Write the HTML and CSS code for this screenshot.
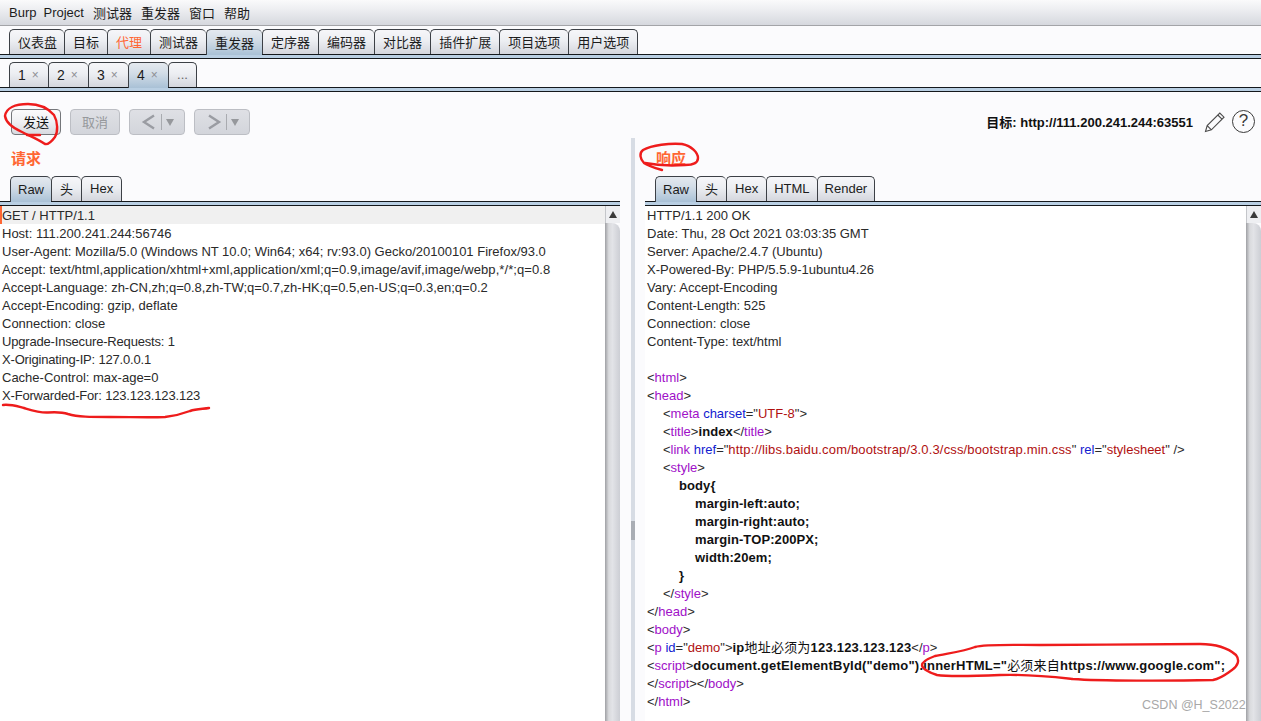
FILE: index.html
```html
<!DOCTYPE html>
<html lang="zh-CN">
<head>
    <meta charset="UTF-8">
    <meta name="viewport" content="width=device-width, initial-scale=1.0">
    <title>Burp Suite</title>
    <link rel="stylesheet" href="styles.css">
</head>
<body>
    <div class="app">
        <div class="menubar">
            <span class="menu-burp">Burp</span><span>Project</span><span>测试器</span><span>重发器</span><span>窗口</span><span>帮助</span>
        </div>

        <div class="tabstrip main-tabs">
            <div class="tab tab-first">仪表盘</div>
            <div class="tab">目标</div>
            <div class="tab tab-alert">代理</div>
            <div class="tab">测试器</div>
            <div class="tab tab-active">重发器</div>
            <div class="tab">定序器</div>
            <div class="tab">编码器</div>
            <div class="tab">对比器</div>
            <div class="tab">插件扩展</div>
            <div class="tab">项目选项</div>
            <div class="tab tab-last">用户选项</div>
        </div>
        <div class="rule"></div>

        <div class="tabstrip sub-tabs">
            <div class="tab tab-num tab-first">1<i>×</i></div>
            <div class="tab tab-num">2<i>×</i></div>
            <div class="tab tab-num">3<i>×</i></div>
            <div class="tab tab-num tab-active">4<i>×</i></div>
            <div class="tab tab-more tab-last">...</div>
        </div>
        <div class="rule"></div>

        <div class="toolbar">
            <button class="btn btn-send">发送</button>
            <button class="btn btn-off btn-cancel">取消</button>
            <button class="btn btn-off btn-nav">
                <svg width="16" height="18" viewBox="0 0 16 18"><path d="M13 2.5 3 9l10 6.5" fill="none" stroke="#9a9ca2" stroke-width="2.4"/></svg>
                <span class="nav-sep"></span>
                <span class="nav-drop"></span>
            </button>
            <button class="btn btn-off btn-nav">
                <svg width="16" height="18" viewBox="0 0 16 18"><path d="M3 2.5 13 9 3 15.5" fill="none" stroke="#9a9ca2" stroke-width="2.4"/></svg>
                <span class="nav-sep"></span>
                <span class="nav-drop"></span>
            </button>
            <div class="target">目标: http://111.200.241.244:63551</div>
            <svg class="icon-pencil" width="22" height="22" viewBox="0 0 22 22"><path d="M1.5 20.5 3.2 14.6 15.8 2 20 6.2 7.4 18.8ZM3.2 14.6 7.4 18.8M13.8 4 18 8.2" fill="none" stroke="#4a4a4a" stroke-width="1.1"/></svg>
            <div class="icon-help">?</div>
        </div>

        <div class="split">
            <section class="panel panel-req">
                <h2 class="panel-title">请求</h2>
                <div class="tabstrip inner-tabs">
                    <div class="tab tab-active tab-tight">Raw</div>
                    <div class="tab">头</div>
                    <div class="tab tab-last">Hex</div>
                </div>
                <div class="rule"></div>
                <div class="editor">
                    <div class="text">
                        <div class="line current">GET / HTTP/1.1</div>
                        <div class="line">Host: 111.200.241.244:56746</div>
                        <div class="line">User-Agent: Mozilla/5.0 (Windows NT 10.0; Win64; x64; rv:93.0) Gecko/20100101 Firefox/93.0</div>
                        <div class="line loose">Accept: text/html,application/xhtml+xml,application/xml;q=0.9,image/avif,image/webp,*/*;q=0.8</div>
                        <div class="line">Accept-Language: zh-CN,zh;q=0.8,zh-TW;q=0.7,zh-HK;q=0.5,en-US;q=0.3,en;q=0.2</div>
                        <div class="line">Accept-Encoding: gzip, deflate</div>
                        <div class="line">Connection: close</div>
                        <div class="line snug">Upgrade-Insecure-Requests: 1</div>
                        <div class="line snug">X-Originating-IP: 127.0.0.1</div>
                        <div class="line">Cache-Control: max-age=0</div>
                        <div class="line snug">X-Forwarded-For: 123.123.123.123</div>
                    </div>
                    <div class="scrollbar"><div class="scroll-up"></div><div class="scroll-thumb"></div></div>
                </div>
            </section>

            <div class="splitter"><div class="splitter-bar"><div class="grip"></div></div></div>

            <section class="panel panel-res">
                <h2 class="panel-title">响应</h2>
                <div class="tabstrip inner-tabs">
                    <div class="tab tab-active tab-tight">Raw</div>
                    <div class="tab">头</div>
                    <div class="tab">Hex</div>
                    <div class="tab tab-tight">HTML</div>
                    <div class="tab tab-last tab-tight">Render</div>
                </div>
                <div class="rule"></div>
                <div class="editor">
                    <div class="text">
                        <div class="line">HTTP/1.1 200 OK</div>
                        <div class="line">Date: Thu, 28 Oct 2021 03:03:35 GMT</div>
                        <div class="line">Server: Apache/2.4.7 (Ubuntu)</div>
                        <div class="line">X-Powered-By: PHP/5.5.9-1ubuntu4.26</div>
                        <div class="line">Vary: Accept-Encoding</div>
                        <div class="line">Content-Length: 525</div>
                        <div class="line">Connection: close</div>
                        <div class="line">Content-Type: text/html</div>
                        <div class="line"></div>
                        <div class="line">&lt;<u>html</u>&gt;</div>
                        <div class="line">&lt;<u>head</u>&gt;</div>
                        <div class="line indent-1">&lt;<u>meta</u> <em>charset</em>="<s>UTF-8</s>"&gt;</div>
                        <div class="line indent-1">&lt;<u>title</u>&gt;<b>index</b>&lt;/<u>title</u>&gt;</div>
                        <div class="line indent-1">&lt;<u>link</u> <em>href</em>="<s class="loose-url">http://libs.baidu.com/bootstrap/3.0.3/css/bootstrap.min.css</s>" <em>rel</em>="<s>stylesheet</s>" /&gt;</div>
                        <div class="line indent-1">&lt;<u>style</u>&gt;</div>
                        <div class="line indent-2"><b>body{</b></div>
                        <div class="line indent-3"><b>margin-left:auto;</b></div>
                        <div class="line indent-3"><b>margin-right:auto;</b></div>
                        <div class="line indent-3"><b>margin-TOP:200PX;</b></div>
                        <div class="line indent-3"><b>width:20em;</b></div>
                        <div class="line indent-2"><b>}</b></div>
                        <div class="line indent-1">&lt;/<u>style</u>&gt;</div>
                        <div class="line">&lt;/<u>head</u>&gt;</div>
                        <div class="line">&lt;<u>body</u>&gt;</div>
                        <div class="line">&lt;<u>p</u> <em>id</em>="<s>demo</s>"&gt;<b class="wide">ip<span class="cjk">地址必须为</span>123.123.123.123</b>&lt;/<u>p</u>&gt;</div>
                        <div class="line">&lt;<u>script</u>&gt;<b class="wide">document.getElementById("demo").innerHTML="<span class="cjk">必须来自</span>https://www.google.com";</b></div>
                        <div class="line">&lt;/<u>script</u>&gt;&lt;/<u>body</u>&gt;</div>
                        <div class="line">&lt;/<u>html</u>&gt;</div>
                    </div>
                    <div class="scrollbar"><div class="scroll-up"></div><div class="scroll-thumb"></div></div>
                </div>
            </section>
        </div>

        <!-- red pen marks on top of the screenshot -->
        <svg class="ink" width="1261" height="721" viewBox="0 0 1261 721">
            <path d="M45 144C38 139 30 136 22 132C13 128 6 123 5 116C6 108 15 104 28 104C38 104 48 108 54 115C58 122 58 132 55 137C52 141 48 145 45 144Z"/>
            <path d="M27 135H40" stroke-width="3"/>
            <path d="M662 170C655 168 648 166 644 163C640 159 639 153 643 150C652 145 670 143 682 144C692 146 698 153 698 158C698 163 694 165 685 165C670 166 655 165 645 163"/>
            <path d="M3 405C10 404 16 406 24 408C34 411 40 413 48 412.5C56 412 62 412 68 414C78 417 90 417 110 417C130 417 150 417.5 165 417C174 416 182 414 190 411C196 409 203 409 209 408"/>
            <path d="M922 665C922 669 928 672 937 675C950 677 975 676 1000 675C1030 674 1055 677 1073 679C1100 681 1170 681 1213 680C1222 678 1226 674 1232 670C1238 666 1240 660 1236 655C1228 648 1215 644 1200 644C1160 644 1090 645 1040 645C1010 645 985 644 975 647C965 651 950 653 935 656C927 659 922 662 922 665Z"/>
        </svg>
        <div class="watermark">CSDN @H_S2022</div>
    </div>
</body>
</html>
```

FILE: styles.css
```css
* {
    box-sizing: border-box;
    margin: 0;
    padding: 0;
}

body {
    background: #fbfbfd;
    font-family: "Liberation Sans", "Noto Sans CJK SC", sans-serif;
    font-size: 13px;
    color: #1c1c1c;
}

.app {
    position: relative;
    display: flex;
    flex-direction: column;
    width: 1261px;
    height: 721px;
    overflow: hidden;
}

.menubar {
    display: flex;
    align-items: center;
    gap: 9px;
    flex: none;
    height: 26px;
    padding: 0 0 1px 9px;
    background: linear-gradient(#fafafb 0%, #eeeff2 35%, #d6d8de 100%);
    border-bottom: 1px solid #a3a4a8;
}

.menu-burp {
    margin-right: -2px;
}

.tabstrip {
    display: flex;
    align-items: flex-end;
    flex: none;
}

.main-tabs {
    height: 28px;
    padding-left: 9px;
}

.sub-tabs {
    height: 28px;
    padding-left: 9px;
}

.tab {
    position: relative;
    display: flex;
    align-items: center;
    justify-content: center;
    height: 25px;
    padding: 0 8px 1px;
    background: linear-gradient(#f6f6f9 0%, #eceef2 45%, #d4d6dd 100%);
    border: 1px solid #3c4046;
    border-right: 0;
    border-bottom: 0;
    border-radius: 5px 5px 0 0;
    white-space: nowrap;
}

.tab-first {
    padding-right: 7px;
}

.tab-tight {
    padding-left: 7px;
    padding-right: 7px;
}

.tab-last {
    border-right: 1px solid #3c4046;
}

.tab-alert {
    color: #ff6633;
}

.tab-active {
    height: 26px;
    margin-bottom: -1px;
    background: linear-gradient(#e4e9ef 0%, #d3dde7 40%, #a9c1d6 100%);
}

.tab-num {
    justify-content: flex-start;
    width: 40px;
    padding-left: 8px;
    font-size: 14px;
}

.tab-num.tab-first {
    width: 39px;
}

.tab-num i {
    margin-left: 6px;
    font-style: normal;
    font-size: 12px;
    color: #8d8f94;
}

.tab-more {
    width: 29px;
    color: #666;
}

.rule {
    flex: none;
    height: 5px;
    background: #b9cfe3;
    border-top: 1px solid #14181c;
    border-bottom: 1px solid #14181c;
}

.toolbar {
    display: flex;
    align-items: flex-start;
    flex: none;
    height: 46px;
    padding: 17px 5px 0 11px;
}

.btn {
    display: flex;
    align-items: center;
    justify-content: center;
    height: 26px;
    padding-bottom: 2px;
    font: inherit;
    border-radius: 4px;
    border: 1px solid #74767a;
    background: linear-gradient(#fbfbfc 0%, #eff0f3 50%, #d8dae0 100%);
    color: #111;
}

.btn-send {
    width: 50px;
    margin-right: 9px;
}

.btn-off {
    border-color: #bcbec4;
    background: linear-gradient(#dfe0e5, #d3d5db);
    color: #96989c;
}

.btn-cancel {
    width: 50px;
    margin-right: 9px;
}

.btn-nav {
    justify-content: flex-start;
    width: 56px;
    margin-right: 9px;
    padding: 0 0 0 11px;
}

.nav-sep {
    width: 1px;
    height: 16px;
    margin: 0 4px;
    background: #a9abb0;
}

.nav-drop {
    width: 0;
    height: 0;
    border-left: 4px solid transparent;
    border-right: 4px solid transparent;
    border-top: 7px solid #96989c;
}

.target {
    margin: 3px 11px 0 auto;
    font-size: 13px;
    font-weight: bold;
    color: #111;
}

.icon-pencil {
    margin: 2px 6px 0 0;
}

.icon-help {
    width: 23px;
    height: 23px;
    margin: 1px 1px 0 0;
    border: 1.5px solid #3a3a3a;
    border-radius: 50%;
    text-align: center;
    font-size: 17px;
    line-height: 20px;
    color: #3a3a3a;
}

.split {
    display: grid;
    grid-template-columns: 620px 25px 616px;
    flex: 1;
    min-height: 0;
}

.panel {
    display: flex;
    flex-direction: column;
    min-height: 0;
}

.panel-title {
    flex: none;
    height: 38px;
    padding: 12px 0 0 11px;
    font-size: 15px;
    line-height: 18px;
    font-weight: bold;
    color: #ff6633;
}

.inner-tabs {
    height: 25px;
    padding-left: 10px;
}

.editor {
    display: flex;
    flex: 1;
    min-height: 0;
}

.text {
    flex: 1;
    min-width: 0;
    overflow: hidden;
    padding-left: 2px;
    background: #fff;
    font-size: 13px;
    color: #2a2a2a;
}

.line {
    height: 18px;
    line-height: 20px;
    white-space: pre;
}

.current {
    margin-left: -2px;
    background: #f0f0f0;
    border-left: 2px solid #ff6633;
}

.indent-1 {
    padding-left: 16px;
}

.indent-2 {
    padding-left: 32px;
}

.indent-3 {
    padding-left: 48px;
}

.snug {
    letter-spacing: -0.18px;
}

.loose {
    letter-spacing: 0.08px;
}

.text u {
    text-decoration: none;
    color: #a010c8;
}

.text em {
    font-style: normal;
    color: #1020d0;
}

.text s {
    text-decoration: none;
    color: #b01010;
}

.text .loose-url {
    letter-spacing: 0.15px;
}

.text b {
    color: #111;
    letter-spacing: 0.1px;
}

.text .wide {
    letter-spacing: 0.21px;
}

.cjk {
    font-weight: normal;
}

.scrollbar {
    display: flex;
    flex-direction: column;
    flex: none;
    width: 15px;
}

.scroll-up {
    position: relative;
    flex: none;
    height: 17px;
    background: #eeeff2;
    border-left: 1px solid #c4c6ca;
}

.scroll-up::before {
    content: '';
    position: absolute;
    top: 5px;
    left: 3px;
    border-left: 4px solid transparent;
    border-right: 4px solid transparent;
    border-bottom: 7px solid #3a3a3a;
}

.scroll-thumb {
    flex: 1;
    background: linear-gradient(to right, #9fa0a4 0%, #d9dadd 25%, #e2e3e7 50%, #ccced4 100%);
    border-radius: 0 8px 0 0;
}

.splitter {
    display: flex;
    justify-content: center;
}

.splitter-bar {
    display: flex;
    flex-direction: column;
    width: 4px;
    background: #d7dce4;
}

.grip {
    width: 4px;
    height: 19px;
    margin-top: 383px;
    background: #a9adb4;
}

.ink {
    position: absolute;
    top: 0;
    left: 0;
    pointer-events: none;
}

.ink path {
    fill: none;
    stroke: #ee1c1c;
    stroke-width: 2.4;
    stroke-linecap: round;
}

.watermark {
    position: absolute;
    left: 1142px;
    top: 698px;
    font-size: 12.5px;
    color: #a8a8a8;
}
```
